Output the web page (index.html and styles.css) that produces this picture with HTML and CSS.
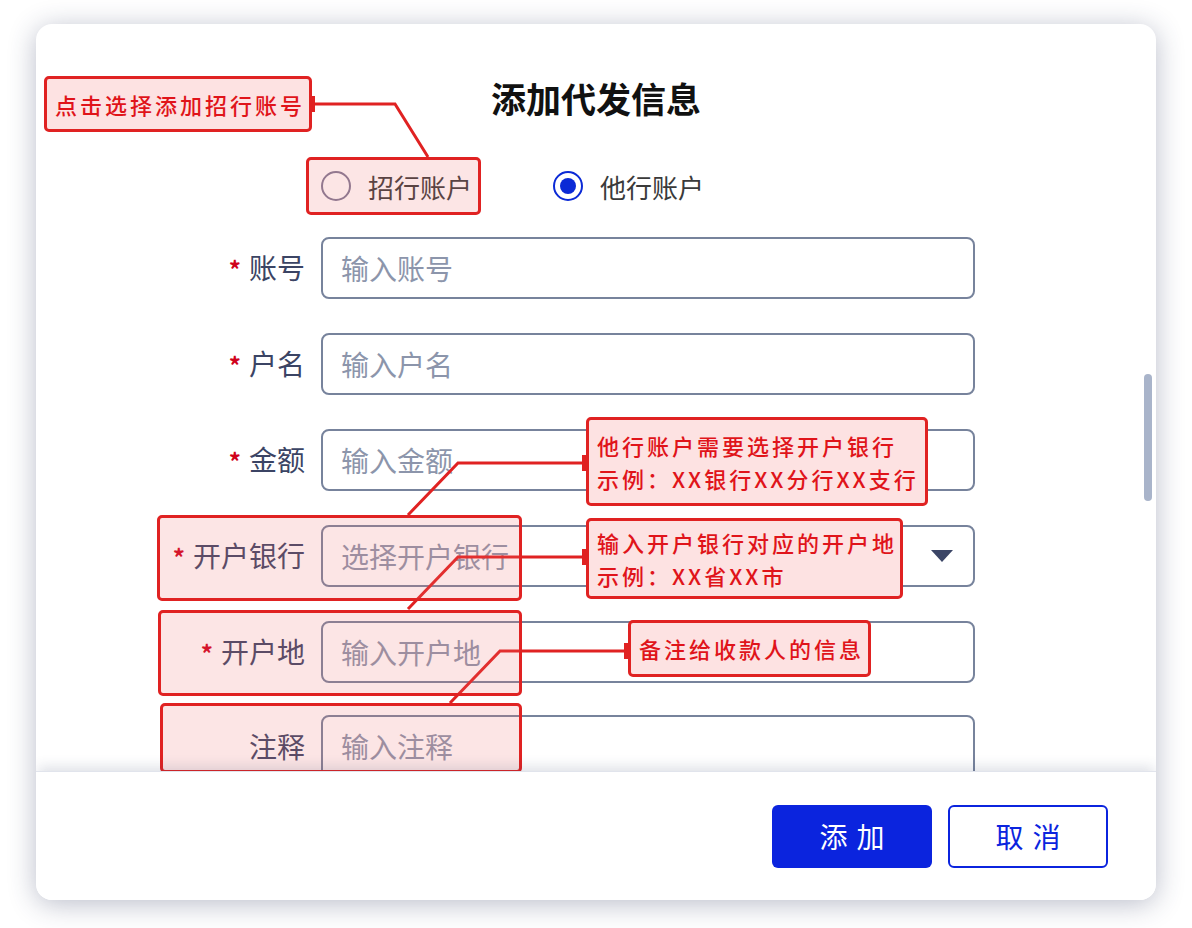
FILE: index.html
```html
<!DOCTYPE html>
<html lang="zh-CN">
<head>
  <meta charset="UTF-8">
  <meta name="viewport" content="width=device-width, initial-scale=1.0">
  <title>添加代发信息</title>
  <link rel="stylesheet" href="styles.css">
</head>
<body>

  <div class="dialog">
    <div class="dialog-body">
      <h2 class="dialog-title">添加代发信息</h2>

      <div class="radio-group">
        <label class="radio-option"><span class="radio"></span>招行账户</label>
        <label class="radio-option"><span class="radio radio-checked"></span>他行账户</label>
      </div>

      <form class="form" id="payForm">
        <div class="form-row">
          <label class="form-label"><span class="required">*</span>账号</label>
          <input class="form-input" type="text" placeholder="输入账号">
        </div>
        <div class="form-row">
          <label class="form-label"><span class="required">*</span>户名</label>
          <input class="form-input" type="text" placeholder="输入户名">
        </div>
        <div class="form-row">
          <label class="form-label"><span class="required">*</span>金额</label>
          <input class="form-input" type="text" placeholder="输入金额">
        </div>
        <div class="form-row">
          <label class="form-label"><span class="required">*</span>开户银行</label>
          <div class="form-input form-select">
            <span class="placeholder">选择开户银行</span>
            <svg class="select-arrow" width="22" height="12" viewBox="0 0 22 12"><path d="M0 0 H22 L11 12 Z" fill="#3b4566"/></svg>
          </div>
        </div>
        <div class="form-row">
          <label class="form-label"><span class="required">*</span>开户地</label>
          <input class="form-input" type="text" placeholder="输入开户地">
        </div>
        <div class="form-row form-row-last">
          <label class="form-label">注释</label>
          <textarea class="form-input form-textarea" placeholder="输入注释"></textarea>
        </div>
      </form>

      <div class="scrollbar"></div>
    </div>

    <div class="dialog-footer">
      <button class="btn btn-primary" type="submit" form="payForm">添加</button>
      <button class="btn btn-default" type="button">取消</button>
    </div>
  </div>

  <!-- annotation layer -->
  <div class="notes">
    <svg class="note-lines" width="1192" height="928" viewBox="0 0 1192 928">
      <g fill="none" stroke="#e02222" stroke-width="3">
        <path d="M312 104 H395 L428 157"/>
        <path d="M586 463 H458 L408 515"/>
        <path d="M586 557 H458 L408 609"/>
        <path d="M628 651 H500 L450 703"/>
      </g>
      <g fill="#e02222">
        <rect x="310" y="96" width="5" height="16"/>
        <rect x="582" y="455" width="5" height="16"/>
        <rect x="582" y="549" width="5" height="16"/>
        <rect x="624" y="643" width="5" height="16"/>
      </g>
    </svg>

    <div class="note-area area-radio"></div>
    <div class="note-area area-bank"></div>
    <div class="note-area area-place"></div>
    <div class="note-area area-remark"></div>

    <div class="note note-1">点击选择添加招行账号</div>
    <div class="note note-2"><span>他行账户需要选择开户银行</span><span>示例：XX银行XX分行XX支行</span></div>
    <div class="note note-3"><span>输入开户银行对应的开户地</span><span>示例：XX省XX市</span></div>
    <div class="note note-4">备注给收款人的信息</div>
  </div>

</body>
</html>
```

FILE: styles.css
```css
body {
  font-family: "Noto Sans CJK SC", "Noto Sans", sans-serif;
  margin: 0;
  padding: 24px 36px 0;
  background-color: #ffffff;
  position: relative;
  width: 1192px;
  height: 928px;
  box-sizing: border-box;
  overflow: hidden;
}

.dialog {
  width: 1120px;
  height: 876px;
  background: white;
  border-radius: 16px;
  box-shadow: 0 4px 28px rgba(40, 50, 90, 0.32);
  display: flex;
  flex-direction: column;
  overflow: hidden;
}

.dialog-body {
  flex: 1;
  position: relative;
  overflow: hidden;
  padding-top: 50px;
}

.dialog-title {
  margin: 0;
  font-size: 35px;
  line-height: 48px;
  font-weight: bold;
  color: #111;
  text-align: center;
}

.radio-group {
  display: flex;
  align-items: center;
  gap: 81px;
  height: 40px;
  margin: 44px 0 0 285px;
}

.radio-option {
  display: flex;
  align-items: center;
  gap: 17px;
  font-size: 26px;
  color: #3a3a3a;
  cursor: pointer;
}

.radio {
  width: 30px;
  height: 30px;
  border: 2px solid #7f7a96;
  border-radius: 50%;
  box-sizing: border-box;
  display: flex;
  align-items: center;
  justify-content: center;
}

.radio-checked {
  border-color: #0b2ad6;
}

.radio-checked::after {
  content: "";
  width: 16px;
  height: 16px;
  border-radius: 50%;
  background-color: #0b2ad6;
}

.form {
  margin-top: 31px;
}

.form-row {
  display: grid;
  grid-template-columns: 269px 654px;
  column-gap: 16px;
  align-items: center;
  margin-bottom: 34px;
}

.form-row-last {
  margin-top: -2px;
  align-items: start;
}

.form-row-last .form-label {
  padding-top: 12px;
}

.form-label {
  text-align: right;
  font-size: 28px;
  line-height: 38px;
  color: #3b4464;
}

.required {
  color: #d0021b;
  font-size: 24px;
  font-weight: bold;
  margin-right: 8px;
}

.form-input {
  height: 62px;
  padding: 0 18px;
  border: 2px solid #77839c;
  border-radius: 8px;
  font-family: inherit;
  font-size: 28px;
  color: #3b4464;
  background-color: white;
  box-sizing: border-box;
  outline: none;
}

.form-input::placeholder,
.placeholder {
  color: #8c95ab;
}

.form-select {
  display: flex;
  align-items: center;
  justify-content: space-between;
  padding-right: 20px;
}

.form-textarea {
  height: 110px;
  padding-top: 10px;
  resize: none;
  line-height: 38px;
}

.scrollbar {
  position: absolute;
  right: 4px;
  top: 350px;
  width: 8px;
  height: 127px;
  border-radius: 4px;
  background-color: #a9b4ca;
}

.dialog-footer {
  height: 129px;
  flex-shrink: 0;
  display: flex;
  justify-content: flex-end;
  align-items: center;
  gap: 16px;
  padding-right: 48px;
  border-top: 1px solid #e1e4ec;
  box-shadow: 0 -6px 12px -2px rgba(50, 60, 100, 0.16);
  position: relative;
  z-index: 1;
  background: white;
  box-sizing: border-box;
}

.btn {
  width: 160px;
  height: 63px;
  border-radius: 6px;
  font-family: inherit;
  font-size: 28px;
  letter-spacing: 9px;
  text-indent: 9px;
  cursor: pointer;
  box-sizing: border-box;
}

.btn-primary {
  background-color: #0b24de;
  border: none;
  color: white;
}

.btn-default {
  background-color: white;
  border: 2px solid #0b24de;
  color: #0b24de;
}

/* annotations */
.notes {
  position: absolute;
  left: 0;
  top: 0;
  width: 1192px;
  height: 928px;
  pointer-events: none;
}

.note-lines {
  position: absolute;
  left: 0;
  top: 0;
}

.note-area {
  position: absolute;
  border: 3px solid #e02222;
  border-radius: 5px;
  background-color: rgba(240, 110, 110, 0.18);
  box-sizing: border-box;
}

.area-radio { left: 306px; top: 157px; width: 175px; height: 58px; }
.area-bank { left: 157px; top: 515px; width: 365px; height: 86px; }
.area-place { left: 158px; top: 610px; width: 364px; height: 86px; }
.area-remark { left: 160px; top: 703px; width: 362px; height: 70px; }

.note {
  position: absolute;
  display: flex;
  flex-direction: column;
  justify-content: center;
  padding: 0 8px;
  border: 3px solid #e02222;
  border-radius: 5px;
  background-color: #fde2e2;
  color: #e0141a;
  font-size: 22px;
  font-weight: 500;
  line-height: 33px;
  letter-spacing: 3px;
  white-space: nowrap;
  box-sizing: border-box;
}

.note-1 { left: 44px; top: 76px; width: 268px; height: 56px; }
.note-2 { left: 586px; top: 417px; width: 342px; height: 89px; }
.note-3 { left: 586px; top: 518px; width: 317px; height: 81px; }
.note-4 { left: 628px; top: 620px; width: 243px; height: 57px; }
```
